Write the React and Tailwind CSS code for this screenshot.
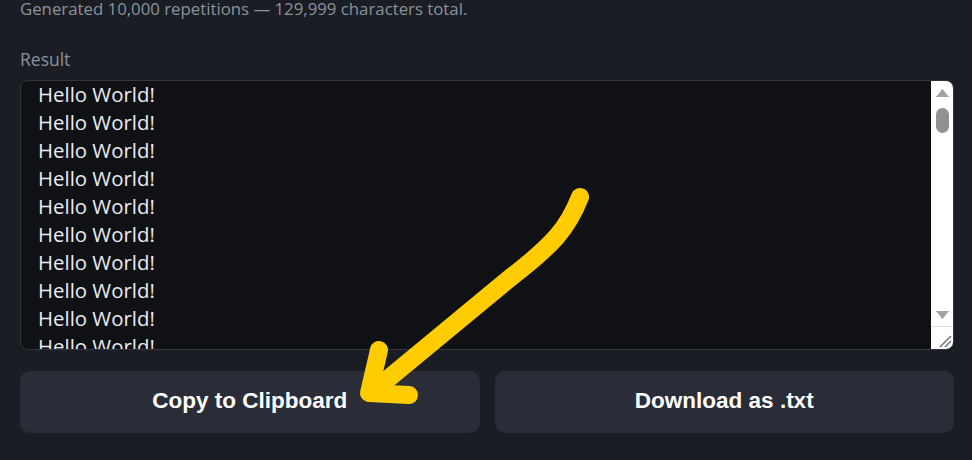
import React from "react";

const lines = Array.from({ length: 12 }, () => "Hello World!");

const FakeScrollbar = () => {
  return (
    <div className="flex w-[22px] flex-col bg-white">
      <div className="flex flex-1 flex-col items-center pt-[7px]">
        <svg width="15" height="10" viewBox="0 0 15 10">
          <path d="M7.5 1 L14 9 L1 9 Z" fill="#a3a3a3" />
        </svg>
        <div className="mt-[10px] h-[25px] w-[13px] rounded-full bg-[#919191]" />
        <div className="flex-1" />
        <svg width="15" height="10" viewBox="0 0 15 10" className="mb-[6px]">
          <path d="M1 1 L14 1 L7.5 9 Z" fill="#a3a3a3" />
        </svg>
      </div>
      <div className="relative h-[23px] border-t border-[#dcdcdc]">
        <svg width="22" height="22" viewBox="0 0 22 22" className="absolute right-0 bottom-0">
          <path d="M9 20 L20 9 M14 20 L20 14" stroke="#6b6b6b" strokeWidth="1.4" />
        </svg>
      </div>
    </div>
  );
};

export default function App() {
  return (
    <div className="relative h-[460px] w-full overflow-hidden bg-[#1a1d23] pl-5 pr-[18px] font-['Open_Sans','Noto_Sans',sans-serif]">
      <p className="-mt-[3px] text-[16.8px] leading-6 text-[#8b929b]">
        Generated 10,000 repetitions — 129,999 characters total.
      </p>

      <label className="mt-[26px] block text-[17.5px] leading-6 text-[#8b929b]">Result</label>

      <div className="mt-[9px] flex h-[270px] overflow-hidden rounded-lg border border-[#30353e] bg-[#0f1115]">
        <div className="flex-1 overflow-hidden pl-[17px]">
          <div className="-mt-px text-[20.4px] leading-7 text-[#e8ecf1]">
            {lines.map((l, i) => (
              <div key={i}>{l}</div>
            ))}
          </div>
        </div>
        <FakeScrollbar />
      </div>

      <div className="mt-[21px] grid grid-cols-2 gap-[15px] font-['Liberation_Sans',Arial,sans-serif]">
        <button className="h-[62px] rounded-[10px] bg-[#2a2d37] pb-[3px] text-[22.5px] font-bold text-white">
          Copy to Clipboard
        </button>
        <button className="h-[62px] rounded-[10px] bg-[#2a2d37] pb-[3px] text-[22.5px] font-bold text-white">
          Download as .txt
        </button>
      </div>

      {/* annotation arrow drawn over the page */}
      <svg
        className="pointer-events-none absolute inset-0"
        width="972"
        height="460"
        viewBox="0 0 972 460"
      >
        <g fill="none" stroke="#ffcc00" strokeWidth="18" strokeLinecap="round" strokeLinejoin="round">
          <path d="M580 197 C568 228 553 245 510 278 L377 388" />
          <path d="M379 350 L369 393 L409 395" />
        </g>
      </svg>
    </div>
  );
}
